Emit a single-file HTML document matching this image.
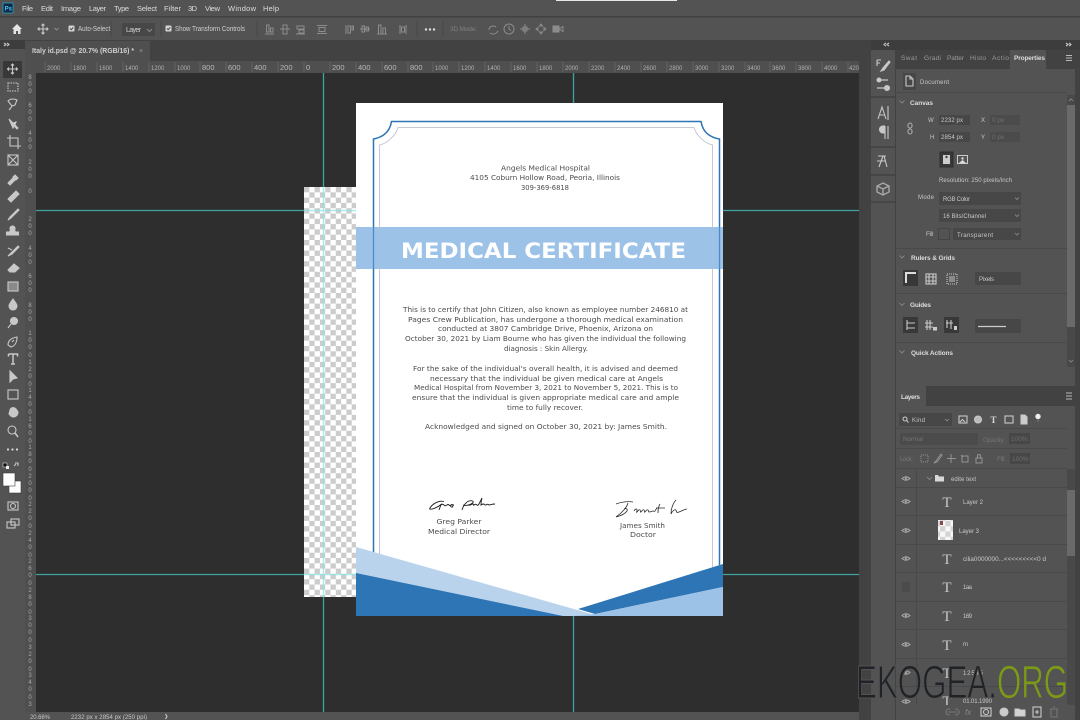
<!DOCTYPE html>
<html><head><meta charset="utf-8"><title>Photoshop</title>
<style>
html,body{margin:0;padding:0;width:1080px;height:720px;overflow:hidden;background:#535353}
svg{position:absolute;left:0;top:0;display:block}
text{font-family:"Liberation Sans",sans-serif}
.u{font-size:7px;fill:#cfcfcf}
.m{font-size:7.5px;fill:#dcdcdc}
.b{font-size:6.5px;fill:#dcdcdc;font-weight:bold}
.d{font-size:6.5px;fill:#808080}
.l{font-size:6px;fill:#c8c8c8}
.r{font-size:6px;fill:#b0b0b0}
.t{font-size:7.5px;fill:#b8b8b8}
.doc{font-family:"DejaVu Sans",sans-serif;font-size:7px;fill:#4c4c4c;text-anchor:middle}
.i{fill:none;stroke:#c8c8c8;stroke-width:1.1}
.ch{fill:none;stroke:#8e8e8e;stroke-width:.8}
.dim{fill:none;stroke:#8c8c8c;stroke-width:1}
.v{position:absolute;left:27px;width:6px;font:6px/7.2px "Liberation Sans",sans-serif;color:#a8a8a8;word-break:break-all;text-align:center}
</style></head><body>
<svg width="1080" height="720" viewBox="0 0 1080 720" xmlns="http://www.w3.org/2000/svg">
<defs>
<pattern id="ck" x="304" y="187" width="10.6" height="10.6" patternUnits="userSpaceOnUse">
<rect width="10.6" height="10.6" fill="#fff"/><rect width="5.3" height="5.3" fill="#ccc"/><rect x="5.3" y="5.3" width="5.3" height="5.3" fill="#ccc"/>
</pattern>
<filter id="s" x="-2%" y="-2%" width="104%" height="104%"><feGaussianBlur stdDeviation=".3"/></filter>
</defs>
<rect width="1080" height="720" fill="#535353"/>
<g filter="url(#s)">
<!-- top bars -->
<rect x="0" y="16" width="1080" height="1.5" fill="#424242"/>
<rect x="556" y="0" width="121" height="1" fill="#e8e8e8"/>
<rect x="3" y="3" width="10" height="10" fill="#0c2c4a" stroke="#2aa0b8" stroke-width=".8"/>
<text x="4.6" y="10.5" font-size="6" font-weight="bold" fill="#4fc3f0">Ps</text>
<text class="m" x="22" y="11" textLength="11">File</text>
<text class="m" x="41" y="11" textLength="12">Edit</text>
<text class="m" x="61" y="11" textLength="20">Image</text>
<text class="m" x="89" y="11" textLength="17">Layer</text>
<text class="m" x="114" y="11" textLength="15">Type</text>
<text class="m" x="137" y="11" textLength="20">Select</text>
<text class="m" x="164" y="11" textLength="17">Filter</text>
<text class="m" x="188" y="11" textLength="9">3D</text>
<text class="m" x="205" y="11" textLength="15">View</text>
<text class="m" x="228" y="11" textLength="28">Window</text>
<text class="m" x="263" y="11" textLength="16">Help</text>
<!-- options bar -->
<path d="M12 29l5-5 5 5h-1.500v5h-2.500v-3h-2v3h-2.500v-5z" fill="#e4e4e4"/>
<path class="i" d="M43 24v10M38 29h10M41.500 25.500l1.500-1.500 1.500 1.500M41.500 32.500l1.500 1.500 1.500-1.500M39.500 27.500l-1.500 1.500 1.500 1.500M46.500 27.500l1.500 1.500-1.500 1.500"/>
<path class="dim" d="M54.500 28l2 2 2-2"/>
<rect x="68.500" y="25.500" width="6" height="6" rx="1" fill="#d4d4d4"/><path d="M70 28.500l1.200 1.200 2-2.200" stroke="#444" fill="none"/>
<text class="u" x="78" y="31" textLength="34" lengthAdjust="spacingAndGlyphs">Auto-Select:</text>
<rect x="122" y="23" width="33" height="13" fill="#474747"/>
<text class="u" x="126" y="32" textLength="15">Layer</text><path class="dim" d="M147 29l2.500 2.500 2.500-2.500"/>
<rect x="165.500" y="25.500" width="6" height="6" rx="1" fill="#d4d4d4"/><path d="M167 28.500l1.200 1.200 2-2.200" stroke="#444" fill="none"/>
<text class="u" x="175" y="31" textLength="70" lengthAdjust="spacingAndGlyphs">Show Transform Controls</text>
<g class="dim">
<path d="M265 34h9M266.500 25h2.500v7h-2.500zM270.500 28h2.500v4h-2.500z"/>
<path d="M280 29h10M283 25h4v9h-4z"/>
<path d="M296 34h9M297 26h7v3h-7zM299 30h5v3h-5z"/>
<path d="M317 25.500h10M317 33.500h10M319 27.500h6v4h-6z"/>
<path d="M346 25v9M348 26h2.500v7h-2.500zM352 26h1.500v4h-1.500z"/>
<path d="M360 29h10M362 26h2.500v6h-2.500zM366 27h2.500v4h-2.500z"/>
<path d="M377 34h10M378.500 25h2.500v9h-2.500zM383 28h2.500v6h-2.500z"/>
<path d="M400 25v9M406 25v9M401.500 27h3v5h-3z"/>
<path d="M489 30c0-4 5-5 7-3M490 33c3 2 6 1 8-2" />
<circle cx="509" cy="29" r="5"/><path d="M509 26v3l2 1.500"/>
<path d="M525 24v10M520 29h10M523 27h4v4h-4z"/>
<path d="M541 24l1.500 2h-3zM541 34l1.500-2h-3zM536 29l2-1.500v3zM546 29l-2-1.500v3z"/>
<rect x="553" y="26" width="6" height="6" fill="#8c8c8c"/><path d="M559 29l4-2.500v5z"/>
</g>
<circle cx="426" cy="29.500" r="1.200" fill="#ddd"/><circle cx="430" cy="29.500" r="1.200" fill="#ddd"/><circle cx="434" cy="29.500" r="1.200" fill="#ddd"/>
<text class="d" x="450" y="31" textLength="27">3D Mode:</text>
<path d="M111 21v16M161 21v16M257 21v16M417 21v16M443 21v16" stroke="#474747"/>
<!-- tab row -->
<rect x="0" y="40" width="860" height="21" fill="#434343"/>
<rect x="0" y="40" width="25" height="9" fill="#3d3d3d"/>
<path d="M4 43l2 1.500-2 1.500M7 43l2 1.500-2 1.500" class="i" stroke-width=".7"/>
<rect x="25" y="41" width="125" height="20" fill="#4f4f4f"/>
<text x="32" y="53" font-size="7" font-weight="bold" fill="#d0d0d0" textLength="102" lengthAdjust="spacingAndGlyphs">Italy id.psd @ 20.7% (RGB/16) *</text>
<text x="139" y="53" font-size="7" fill="#999">×</text>
<!-- left tools -->
<rect x="0" y="49" width="25" height="671" fill="#535353"/>
<rect x="3" y="61" width="19" height="17" fill="#393939"/>
<g class="i">
<path d="M12.500 64v10M7.500 69h10M11 65.500l1.500-1.500 1.500 1.500M11 72.500l1.500 1.500 1.500-1.500M9 67.500l-1.500 1.500 1.500 1.500M16 67.500l1.500 1.500-1.500 1.500"/>
<rect x="8" y="83" width="10" height="8" stroke-dasharray="1.500 1"/>
<path d="M8 101c3-3 7-2 9-1l-2 5-3 1zM12 106c-1 2-2 3-3 4"/>
<path d="M9 119l4 4 3-1-1 3 3 3-1 1-3-3-1 2z" fill="#c8c8c8"/>
<path d="M10 135v11h11M7 138h11v11"/>
<rect x="8" y="155" width="10" height="10"/><path d="M8 155l10 10M18 155l-10 10"/>
<path d="M8 183l6-6 2 2-6 6zM15 175l3 3-2 2-3-3z" fill="#c8c8c8"/>
<path d="M8 199l8-8 3 3-8 8z" fill="#c8c8c8"/>
<path d="M8 220l2-3 8-8 1 1-8 8z" fill="#c8c8c8"/>
<path d="M12.500 226a2.500 2.500 0 012 4l1 2h3v3h-12v-3h3l1-2a2.500 2.500 0 012-4z" fill="#c8c8c8"/>
<path d="M8 256l3-3 7-7 1 1-7 7zM8 248l4 2" fill="#c8c8c8"/>
<path d="M8 270l6-6 5 4-4 4H10z" fill="#c8c8c8"/>
<rect x="8" y="282" width="10" height="9" fill="#8a8a8a"/>
<path d="M13 299c2 3 4 5 4 7a4 4 0 01-8 0c0-2 2-4 4-7z" fill="#c8c8c8"/>
<circle cx="14" cy="321" r="3.500" fill="#c8c8c8"/><path d="M11 324l-3 4"/>
<path d="M8 345c0-4 3-7 9-8 0 5-2 9-6 10zM12 342l2-2"/>
<path d="M8.500 354h9v2.500M8.500 354v2.500M13 354v10M11 364h4" stroke-width="1.500"/>
<path d="M10 371v11l3-3 4-1z" fill="#c8c8c8"/>
<rect x="8" y="390" width="10" height="9"/>
<path d="M10 410c1-3 4-3 6-1l2 3c0 3-2 5-5 5-2 0-3-2-4-3z" fill="#c8c8c8"/>
<circle cx="12" cy="430" r="4"/><path d="M15 433l3 4" stroke-width="1.500"/>
<rect x="8" y="502" width="10" height="8"/><circle cx="13" cy="506" r="2.500"/>
<rect x="7" y="522" width="8" height="6"/><rect x="11" y="519" width="8" height="6"/>
</g>
<circle cx="8" cy="449.500" r="1.100" fill="#ddd"/><circle cx="12.500" cy="449.500" r="1.100" fill="#ddd"/><circle cx="17" cy="449.500" r="1.100" fill="#ddd"/>
<rect x="3" y="463" width="4" height="4" fill="#111" stroke="#ddd" stroke-width=".6"/><rect x="6" y="466" width="3" height="3" fill="#eee"/>
<path class="i" d="M15 463h3v3M14 466l2-2" stroke-width=".8"/>
<rect x="9" y="481" width="12" height="12" fill="#fff" stroke="#3d3d3d" stroke-width=".6"/>
<rect x="3" y="473" width="12" height="13" fill="#fff" stroke="#3d3d3d" stroke-width=".6"/>
<!-- rulers -->
<rect x="25" y="61" width="835" height="12" fill="#505050"/>
<rect x="25" y="61" width="11" height="651" fill="#505050"/>
<path d="M45 62v10M71 62v10M97 62v10M123 62v10M149 62v10M175 62v10M200 62v10M226 62v10M252 62v10M278 62v10M304 62v10M330 62v10M356 62v10M382 62v10M408 62v10M433 62v10M459 62v10M485 62v10M511 62v10M537 62v10M563 62v10M589 62v10M615 62v10M641 62v10M667 62v10M693 62v10M719 62v10M745 62v10M770 62v10M796 62v10M822 62v10M848 62v10" stroke="#6c6c6c" stroke-width=".7"/>
<text class="r" x="47" y="70">2000</text><text class="r" x="73" y="70">1800</text><text class="r" x="99" y="70">1600</text><text class="r" x="125" y="70">1400</text><text class="r" x="151" y="70">1200</text><text class="r" x="177" y="70">1000</text>
<text class="t" x="202" y="70">800</text><text class="t" x="228" y="70">600</text><text class="t" x="254" y="70">400</text><text class="t" x="280" y="70">200</text><text class="t" x="306" y="70">0</text>
<text class="t" x="332" y="70">200</text><text class="t" x="358" y="70">400</text><text class="t" x="384" y="70">600</text><text class="t" x="410" y="70">800</text>
<text class="r" x="435" y="70">1000</text><text class="r" x="461" y="70">1200</text><text class="r" x="487" y="70">1400</text><text class="r" x="513" y="70">1600</text><text class="r" x="539" y="70">1800</text><text class="r" x="565" y="70">2000</text>
<text class="r" x="591" y="70">2200</text><text class="r" x="617" y="70">2400</text><text class="r" x="643" y="70">2600</text><text class="r" x="669" y="70">2800</text><text class="r" x="695" y="70">3000</text><text class="r" x="721" y="70">3200</text>
<text class="r" x="747" y="70">3400</text><text class="r" x="772" y="70">3600</text><text class="r" x="798" y="70">3800</text><text class="r" x="824" y="70">4000</text><text class="r" x="849" y="70">4200</text>
<!-- canvas -->
<rect x="36" y="73" width="824" height="639" fill="#2f2f2f"/>
<path d="M323.500 73v639M573.500 73v639M36 210.500h824M36 574.500h824" stroke="#3fa3a0" stroke-width="1.300"/>
<rect x="304" y="187" width="52" height="410" fill="url(#ck)"/>
<path d="M323.500 187v410M304 210.500h52M304 574.500h52" stroke="#8fe3e3" stroke-width="1.500" opacity=".75"/>
<!-- document -->
<rect x="356" y="103" width="367" height="513" fill="#fff"/>
<path d="M373.500 560V139C384 137 390 131 391.500 121.500H701C702.500 131 708 137 719.500 139V565" fill="none" stroke="#2e74b5" stroke-width="1.500"/>
<path d="M379.500 560V145C388 143 396 135 398 127.500H694C696 135 704 143 712.500 145V570" fill="none" stroke="#c4c8d8" stroke-width="1"/>
<text class="doc" x="545.500" y="170.500" textLength="89" lengthAdjust="spacingAndGlyphs">Angels Medical Hospital</text>
<text class="doc" x="545" y="180" textLength="150" lengthAdjust="spacingAndGlyphs">4105 Coburn Hollow Road, Peoria, Illinois</text>
<text class="doc" x="545" y="190" textLength="48" lengthAdjust="spacingAndGlyphs">309-369-6818</text>
<rect x="356" y="227" width="367" height="42" fill="#9cc2e8"/>
<path d="M373.500 227v42M719.500 227v42" stroke="#4d8ccb" stroke-width="1.300"/>
<text x="543.500" y="258" font-size="21.500" font-weight="bold" fill="#fff" text-anchor="middle" textLength="285" lengthAdjust="spacingAndGlyphs" style="font-family:'DejaVu Sans',sans-serif">MEDICAL CERTIFICATE</text>
<text class="doc" x="545.500" y="312" textLength="285" lengthAdjust="spacingAndGlyphs">This is to certify that John Citizen, also known as employee number 246810 at</text>
<text class="doc" x="545.500" y="322" textLength="275" lengthAdjust="spacingAndGlyphs">Pages Crew Publication, has undergone a thorough medical examination</text>
<text class="doc" x="545.500" y="331" textLength="215" lengthAdjust="spacingAndGlyphs">conducted at 3807 Cambridge Drive, Phoenix, Arizona on</text>
<text class="doc" x="545.500" y="341" textLength="281" lengthAdjust="spacingAndGlyphs">October 30, 2021 by Liam Bourne who has given the individual the following</text>
<text class="doc" x="546" y="351" textLength="84" lengthAdjust="spacingAndGlyphs">diagnosis : Skin Allergy.</text>
<text class="doc" x="545.500" y="371" textLength="265" lengthAdjust="spacingAndGlyphs">For the sake of the individual's overall health, it is advised and deemed</text>
<text class="doc" x="546.500" y="381" textLength="233" lengthAdjust="spacingAndGlyphs">necessary that the individual be given medical care at Angels</text>
<text class="doc" x="546" y="390" textLength="264" lengthAdjust="spacingAndGlyphs">Medical Hospital from November 3, 2021 to November 5, 2021. This is to</text>
<text class="doc" x="545.500" y="400" textLength="267" lengthAdjust="spacingAndGlyphs">ensure that the individual is given appropriate medical care and ample</text>
<text class="doc" x="545" y="410" textLength="76" lengthAdjust="spacingAndGlyphs">time to fully recover.</text>
<text class="doc" x="546" y="429" textLength="242" lengthAdjust="spacingAndGlyphs">Acknowledged and signed on October 30, 2021 by: James Smith.</text>
<path d="M444 501.500C438 500 431 505 429.500 509C432 510 438 507 441 504.500L439 510M441 505c1-1 2-1 3 0s1 1 3 0c1-1 2 0 2 0s1 1 2 0c1-1 2 0 2 1-1 2-3 1-2-1 1-1 2 0 3 0M462 510c1-4 4-8 7-9 4-1 6 1 2 3-2 1-5 2-8 1M468 505c2 1 3-1 5-1 1 0 0 2 1 1s2-1 3 0 1 0 2-1c1-2 2-4 3-6-1 3-1 5-1 7 1-1 2-1 3-1 1 1 0 1 2 1 1-1 2-1 3 0 1 0 3-1 6-1" fill="none" stroke="#1c1c1c" stroke-width=".9"/>
<path d="M616 504c5-2 12-3 17-2M628 503c-1 4-6 10-12 14 4-1 9-3 11-6 1-2-1-3-3-2M634 511c1-2 3-3 3-1s-1 3 0 2 2-3 3-2 0 3 1 2 2-3 3-2 0 3 1 2 2-3 3-2 0 2 1 2c2 0 3-1 4-1s1 1 2 0c1-2 2-3 2-3M660 504c-2 3-2 7-2 9M656 508h9M676 500c-3 3-5 9-5 14 1-2 3-5 5-4 0 2 1 3 3 2 3-1 6-3 8-3" fill="none" stroke="#2a2a2a" stroke-width=".8"/>
<text class="doc" x="459" y="524" textLength="45" lengthAdjust="spacingAndGlyphs">Greg Parker</text>
<text class="doc" x="459" y="534" textLength="62" lengthAdjust="spacingAndGlyphs">Medical Director</text>
<text class="doc" x="642.500" y="528" textLength="45" lengthAdjust="spacingAndGlyphs">James Smith</text>
<text class="doc" x="643" y="537" textLength="26" lengthAdjust="spacingAndGlyphs">Doctor</text>
<polygon points="356,547 595,615 606,616 356,616" fill="#b9d3ec"/>
<polygon points="356,573 563,616 356,616" fill="#2e74b5"/>
<polygon points="578,609 723,564 723,587 595,614" fill="#2e74b5"/>
<polygon points="595,614 723,587 723,616 572,616" fill="#9cc2e8"/>
<!-- status -->
<rect x="25" y="712" width="835" height="8" fill="#535353"/>
<rect x="0" y="712" width="25" height="8" fill="#535353"/>
<text class="l" x="30" y="719" textLength="20">20.66%</text>
<text class="l" x="71" y="719" textLength="76">2232 px x 2854 px (250 ppi)</text>
<path d="M165.500 714l1.500 2.500-1.500 2.500" class="i" stroke-width=".7"/>
<!-- right side -->
<rect x="859" y="40" width="221" height="680" fill="#424242"/>
<rect x="871" y="50" width="24" height="670" fill="#535353"/>
<rect x="871" y="40" width="209" height="10" fill="#3d3d3d"/>
<path class="i" stroke-width=".7" d="M886 43l-2 1.500 2 1.500M889 43l-2 1.500 2 1.500M1066 43l2 1.500-2 1.500M1069 43l2 1.500-2 1.500"/>
<path d="M871 97h24M871 147h24M871 175h24M871 202h24" stroke="#424242" stroke-width="1.500"/>
<g class="i">
<path d="M877 60v6M877 60h4M877 63h3M889 61l-6 7-2 3 3-1 6-8z" fill="#c8c8c8"/>
<path d="M877 80h11M877 88h11" stroke-width="1.200"/><circle cx="879" cy="80" r="2" fill="#c8c8c8"/><circle cx="887" cy="88" r="2.500" fill="#c8c8c8"/>
<path d="M878 119l4-12 4 12M880 115h4M888 106v14"/>
<path d="M885 126v13M888 126v13M885 126h-2a3 3 0 000 7h2" fill="#c8c8c8"/>
<path d="M878 156h8M883 156l-4 11M884 156l3 11M877 161h9"/>
<path d="M883 183l6 3v6l-6 3-6-3v-6zM883 189v6M877 186l6 3 6-3" stroke="#a8a8a8" stroke-width="1.400"/>
</g>
<rect x="896" y="50" width="179" height="19" fill="#424242"/>
<rect x="1010" y="50" width="36" height="19" fill="#535353"/>
<text class="d" x="901" y="60" textLength="16" style="fill:#9a9a9a">Swat</text>
<text class="d" x="924" y="60" textLength="17" style="fill:#9a9a9a">Gradi</text>
<text class="d" x="947" y="60" textLength="17" style="fill:#9a9a9a">Patter</text>
<text class="d" x="970" y="60" textLength="16" style="fill:#9a9a9a">Histo</text>
<text class="d" x="992" y="60" textLength="17" style="fill:#9a9a9a">Actio</text>
<text class="b" x="1014" y="60" textLength="31">Properties</text>
<path d="M1066 55.500h6M1066 58h6M1066 60.500h6" stroke="#bbb" stroke-width="1"/>
<rect x="896" y="69" width="179" height="317" fill="#535353"/>
<rect x="903" y="73" width="13" height="17" fill="#474747"/>
<path class="i" d="M906 76h4l3 3v7h-7zM910 76v3h3"/>
<text class="l" x="920" y="84" textLength="29">Document</text>
<path d="M896 92.500h171M896 248.500h171M896 293.500h171M896 342.500h171" stroke="#484848"/>
<rect x="1067" y="95" width="8" height="272" fill="#484848"/>
<rect x="1067" y="105" width="8" height="222" fill="#6b6b6b"/>
<path class="ch" d="M899.500 100.500l2.500 2.500 2.500-2.500M899.500 255.500l2.500 2.500 2.500-2.500M899.500 303l2.500 2.500 2.500-2.500M899.500 350.500l2.500 2.500 2.500-2.500"/>
<text class="b" x="910" y="105" textLength="23">Canvas</text>
<text class="l" x="928" y="122" textLength="6">W</text>
<rect x="939" y="115" width="31" height="10" fill="#474747"/><text class="l" x="941" y="122" textLength="22">2232 px</text>
<text class="l" x="981" y="122">X</text><rect x="990" y="115" width="30" height="10" fill="#4c4c4c"/><text class="d" x="992" y="122" style="fill:#707070">0 px</text>
<text class="l" x="930" y="139">H</text>
<rect x="939" y="132" width="31" height="10" fill="#474747"/><text class="l" x="941" y="139" textLength="22">2854 px</text>
<text class="l" x="981" y="139">Y</text><rect x="990" y="132" width="30" height="10" fill="#4c4c4c"/><text class="d" x="992" y="139" style="fill:#707070">0 px</text>
<rect x="908" y="123" width="4" height="5" rx="2" class="i" style="stroke:#aaa"/><rect x="908" y="129" width="4" height="5" rx="2" class="i" style="stroke:#aaa"/>
<rect x="940" y="152" width="13" height="15" fill="#393939" stroke="#2f2f2f"/><rect x="943" y="155" width="7" height="9" fill="#ccc"/><circle cx="946.500" cy="157" r="1.200" fill="#444"/>
<rect x="957" y="155" width="11" height="9" fill="#ccc"/><rect x="958" y="156" width="9" height="7" fill="#555"/><circle cx="962.500" cy="158.500" r="1.200" fill="#ddd"/><path d="M959 163l3.500-3 3.500 3z" fill="#ddd"/>
<text class="l" x="939" y="182" textLength="73">Resolution: 250 pixels/inch</text>
<text class="l" x="918" y="199" textLength="16">Mode</text>
<rect x="939" y="192" width="82" height="13" fill="#474747"/><text class="l" x="943" y="201" textLength="27">RGB Color</text>
<rect x="939" y="209" width="82" height="13" fill="#474747"/><text class="l" x="943" y="218" textLength="43">16 Bits/Channel</text>
<text class="l" x="926" y="236" textLength="7">Fill</text>
<rect x="938.500" y="228.500" width="11" height="11" fill="#535353" stroke="#444"/>
<rect x="953" y="228" width="68" height="12" fill="#474747"/><text class="l" x="957" y="237" textLength="36">Transparent</text>
<path class="ch" d="M1015 197.500l2 2 2-2M1015 214.500l2 2 2-2M1015 233l2 2 2-2M1015 277.500l2 2 2-2M1015 325l2 2 2-2"/>
<text class="b" x="911" y="260" textLength="44">Rulers &amp; Grids</text>
<rect x="903" y="270" width="15" height="16" fill="#393939"/><path d="M906 283v-10h10" fill="none" stroke="#ddd" stroke-width="2"/>
<rect class="i" x="926" y="274" width="10" height="10"/><path class="i" d="M929 274v10M933 274v10M926 277h10M926 281h10"/>
<rect class="i" x="947" y="274" width="10" height="10" stroke-dasharray="1 1"/><rect x="949" y="276" width="6" height="6" fill="#8a8a8a"/>
<rect x="975" y="272" width="46" height="13" fill="#474747"/><text class="l" x="979" y="281" textLength="15">Pixels</text>
<text class="b" x="910" y="307" textLength="21">Guides</text>
<rect x="903" y="317" width="15" height="16" fill="#393939"/><path class="i" d="M907 320v10M907 323h8M907 328h8"/>
<path class="i" d="M927 320v10M930 320v10M925 323h8M925 327h8"/><rect x="933" y="327" width="4" height="3.500" fill="#ccc"/>
<rect x="944" y="317" width="15" height="16" fill="#393939"/><path class="i" d="M947 320v8M951 320v9M946 323h7"/><rect x="954" y="326" width="3" height="4" fill="#ccc"/>
<rect x="975" y="319" width="46" height="14" fill="#474747"/><path d="M978 326.500h28" stroke="#ccc" stroke-width="1.200"/>
<text class="b" x="911" y="355" textLength="42">Quick Actions</text>
<path class="ch" d="M1069 101l2-2 2 2M1069 360l2 2 2-2"/>
<!-- Layers panel -->
<rect x="896" y="386" width="179" height="20" fill="#424242"/>
<rect x="896" y="386" width="30" height="20" fill="#535353"/>
<text class="b" x="901" y="399" textLength="19">Layers</text>
<path d="M1066 393h6M1066 396h6M1066 399h6" stroke="#bbb"/>
<rect x="896" y="406" width="179" height="314" fill="#535353"/>
<rect x="899" y="413" width="53" height="13" fill="#474747"/>
<circle cx="905" cy="419" r="2" class="i"/><path class="i" d="M906.500 420.500l2 2"/>
<text class="l" x="912" y="422" textLength="13">Kind</text><path class="ch" d="M945 419l2 2 2-2"/>
<g class="i">
<rect x="959" y="416" width="8" height="7"/><path d="M960 422l2.500-2.500 2.500 2.500"/>
<circle cx="978" cy="419.500" r="3.500" fill="#bbb"/>
<rect x="1005" y="416" width="8" height="7"/>
<path d="M1021 415h4l2 2v7h-6z" fill="#ccc"/>
</g>
<text x="990.500" y="423" font-size="9" font-weight="bold" fill="#d6d6d6" style="font-family:'Liberation Serif',serif">T</text>
<circle cx="1038" cy="416.500" r="2.700" fill="#eee"/><path d="M1038 419v3" stroke="#777"/>
<path d="M896 428.500h171M896 448.500h171M896 468.500h171" stroke="#484848"/>
<rect x="900" y="433" width="78" height="12" fill="#4c4c4c"/>
<text class="d" x="903" y="441" style="fill:#727272" textLength="20">Normal</text>
<text class="d" x="983" y="442" style="fill:#727272" textLength="22">Opacity:</text>
<rect x="1009" y="433" width="21" height="11" fill="#474747"/><text class="d" x="1011" y="441" style="fill:#6e6e6e">100%</text>
<text class="d" x="900" y="461" style="fill:#757575" textLength="13">Lock:</text>
<g class="dim" style="stroke:#939393">
<rect x="921" y="455" width="7" height="7" stroke-dasharray="1 1"/>
<path d="M934 463l2-2 5-7 1 1-5 7z"/>
<path d="M951 454v9M947 458.500h9"/>
<path d="M962 456h6v6h-6zM961 455l2 2"/>
<rect x="976" y="458" width="6" height="5"/><path d="M977.500 458v-2a1.500 1.500 0 013 0v2"/>
</g>
<text class="d" x="997" y="461" style="fill:#757575" textLength="9">Fill:</text>
<rect x="1010" y="453" width="20" height="11" fill="#474747"/><text class="d" x="1012" y="461" style="fill:#6e6e6e">100%</text>
<!-- layers -->
<path d="M916.500 469v236" stroke="#4a4a4a"/>
<path d="M896 487.500h171M896 515.500h171M896 544.500h171M896 572.500h171M896 601.500h171M896 629.500h171M896 658.500h171M896 686.500h171" stroke="#484848"/>
<g fill="none" stroke="#a8a8a8" stroke-width=".9">
<path d="M902 478.500q4-3.500 8 0q-4 3.500-8 0zM902 501.500q4-3.500 8 0q-4 3.500-8 0zM902 530.500q4-3.500 8 0q-4 3.500-8 0zM902 558.500q4-3.500 8 0q-4 3.500-8 0zM902 615.500q4-3.500 8 0q-4 3.500-8 0zM902 644.500q4-3.500 8 0q-4 3.500-8 0zM902 672.500q4-3.500 8 0q-4 3.500-8 0zM902 701.500q4-3.500 8 0q-4 3.500-8 0z"/>
<circle cx="906" cy="478.500" r=".8"/><circle cx="906" cy="501.500" r=".8"/><circle cx="906" cy="530.500" r=".8"/><circle cx="906" cy="558.500" r=".8"/><circle cx="906" cy="615.500" r=".8"/><circle cx="906" cy="644.500" r=".8"/><circle cx="906" cy="672.500" r=".8"/><circle cx="906" cy="701.500" r=".8"/>
</g>
<rect x="902" y="582" width="8" height="10" fill="#4c4c4c"/>
<path class="ch" d="M927 477l2.500 2.500 2.500-2.500"/>
<path d="M935 475h3l1 1.500h5v5h-9z" fill="#d8d8d8"/>
<text class="l" x="951" y="481" textLength="25">edite text</text>
<g font-size="15" fill="#c8c8c8" text-anchor="middle">
<text x="947" y="507" style="font-family:'Liberation Serif',serif">T</text>
<text x="947" y="564" style="font-family:'Liberation Serif',serif">T</text>
<text x="947" y="592" style="font-family:'Liberation Serif',serif">T</text>
<text x="947" y="621" style="font-family:'Liberation Serif',serif">T</text>
<text x="947" y="650" style="font-family:'Liberation Serif',serif">T</text>
<text x="947" y="678" style="font-family:'Liberation Serif',serif">T</text>
<text x="947" y="706" style="font-family:'Liberation Serif',serif">T</text>
</g>
<text class="l" x="963" y="504" textLength="20">Layer 2</text>
<rect x="938" y="520" width="15" height="20" fill="#e8e8e8"/>
<rect x="938" y="520" width="15" height="20" fill="url(#ck)" opacity=".7"/><rect x="940" y="521" width="3" height="4" fill="#884a4a"/>
<text class="l" x="959" y="533" textLength="20">Layer 3</text>
<text class="l" x="963" y="561" textLength="83" lengthAdjust="spacingAndGlyphs">cilia0000000...&lt;&lt;&lt;&lt;&lt;&lt;&lt;&lt;&lt;0 d</text>
<text class="l" x="963" y="589" textLength="9">1aa</text>
<text class="l" x="963" y="618" textLength="9">169</text>
<text class="l" x="963" y="646" textLength="6">m</text>
<text class="l" x="963" y="675" textLength="20">12545</text>
<text class="l" x="963" y="703" textLength="29">01.01.1990</text>
<rect x="1067" y="469" width="8" height="236" fill="#484848"/>
<rect x="1067" y="490" width="8" height="66" fill="#6b6b6b"/>
<rect x="896" y="705" width="179" height="15" fill="#535353"/>
<g class="i">
<path style="stroke:#777" d="M948 712h9M950 709h-1a3 3 0 000 6h1M955 709h1a3 3 0 010 6h-1"/>
<rect x="981" y="708" width="10" height="8"/><circle cx="986" cy="712" r="2.500"/>
<circle cx="1004" cy="712" r="4" fill="#ccc"/>
<path d="M1015 709h4l1 1h5v6h-10z" fill="#d4d4d4"/>
<rect x="1033" y="707" width="8" height="10"/><path d="M1037 710v4M1035 712h4"/>
<path style="stroke:#777" d="M1050 709h8M1051 709v8h6v-8M1053 707h2"/>
</g>
<text x="965" y="715" font-size="8" font-style="italic" fill="#888">fx</text>
</g>
<!-- watermark -->
<text x="856" y="698" font-size="46" fill="#1f2226" stroke="#535353" stroke-width="1.100" textLength="141" lengthAdjust="spacingAndGlyphs">EKOGEA.</text>
<text x="997" y="698" font-size="46" fill="#7c9a16" stroke="#535353" stroke-width=".8" textLength="71" lengthAdjust="spacingAndGlyphs">ORG</text>
</svg>
<div class="v" style="top:75px">800</div><div class="v" style="top:103px">600</div><div class="v" style="top:131px">400</div><div class="v" style="top:160px">200</div><div class="v" style="top:189px">0</div>
<div class="v" style="top:217px">200</div><div class="v" style="top:246px">400</div><div class="v" style="top:274px">600</div><div class="v" style="top:303px">800</div><div class="v" style="top:331px">1000</div>
<div class="v" style="top:360px">1200</div><div class="v" style="top:388px">1400</div><div class="v" style="top:417px">1600</div><div class="v" style="top:445px">1800</div><div class="v" style="top:474px">2000</div>
<div class="v" style="top:502px">2200</div><div class="v" style="top:531px">2400</div><div class="v" style="top:559px">2600</div><div class="v" style="top:588px">2800</div><div class="v" style="top:616px">3000</div>
<div class="v" style="top:645px">3200</div><div class="v" style="top:673px">3400</div><div class="v" style="top:702px">3</div>
</body></html>
